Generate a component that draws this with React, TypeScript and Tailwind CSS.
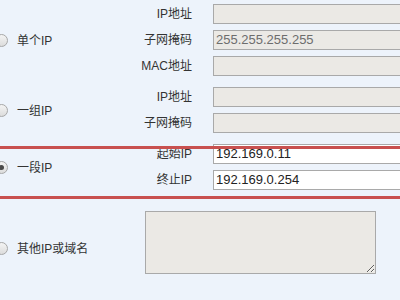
import React from "react";

const font = { fontFamily: '"Liberation Sans", "Noto Sans CJK SC", sans-serif' };

function Radio({ checked }: { checked?: boolean }) {
  return (
    <span className="ml-[-5px] flex h-[13px] w-[13px] shrink-0 items-center justify-center rounded-full border border-[#a7a7a7] bg-gradient-to-b from-[#f4f4f4] to-[#dcdcdc]">
      {checked && <span className="h-[5px] w-[5px] rounded-full bg-[#4a4a4a]" />}
    </span>
  );
}

function Row({ label, value, enabled }: { label: string; value?: string; enabled?: boolean }) {
  return (
    <div className="flex h-[26px] items-center">
      <div className="w-[62px] shrink-0 text-right text-[12px] text-[#333]">{label}</div>
      <div
        className={`ml-[21px] flex h-[20px] w-[220px] shrink-0 items-center border border-[#a9a9a9] pl-[2px] text-[13px] ${
          enabled ? "bg-white text-[#222]" : "bg-[#ebe9e5] text-[#6d6d6d]"
        }`}
      >
        {value}
      </div>
    </div>
  );
}

function Group({ label, checked, children }: { label: string; checked?: boolean; children: React.ReactNode }) {
  return (
    <div className="flex items-center">
      <div className="flex w-[130px] shrink-0 items-center gap-[9px] text-[12px] text-[#333]">
        <Radio checked={checked} />
        <span className="mt-[2px]">{label}</span>
      </div>
      <div className="flex shrink-0 flex-col">{children}</div>
    </div>
  );
}

export default function App() {
  return (
    <div className="relative h-[300px] w-[400px] overflow-hidden bg-[#edf3fb]" style={font}>
      <div className="flex flex-col gap-[5px] pt-[1px]">
        <Group label="单个IP">
          <Row label="IP地址" />
          <Row label="子网掩码" value="255.255.255.255" />
          <Row label="MAC地址" />
        </Group>
        <Group label="一组IP">
          <Row label="IP地址" />
          <Row label="子网掩码" />
        </Group>
        <Group label="一段IP" checked>
          <Row label="起始IP" value="192.169.0.11" enabled />
          <Row label="终止IP" value="192.169.0.254" enabled />
        </Group>
        <div className="flex items-start">
          <div className="mt-[40px] flex w-[130px] shrink-0 items-center gap-[9px] text-[12px] text-[#333]">
            <Radio />
            <span className="mt-[2px]">其他IP或域名</span>
          </div>
          <textarea
            readOnly
            className="ml-[15px] mt-[13px] h-[63px] w-[231px] shrink-0 border border-[#a9a9a9] bg-[#ebe9e5] outline-none"
          />
        </div>
      </div>
      <div className="pointer-events-none absolute left-[-6px] right-[-6px] top-[146px] h-[53px] border-[3px] border-[#c8504f]" />
    </div>
  );
}
